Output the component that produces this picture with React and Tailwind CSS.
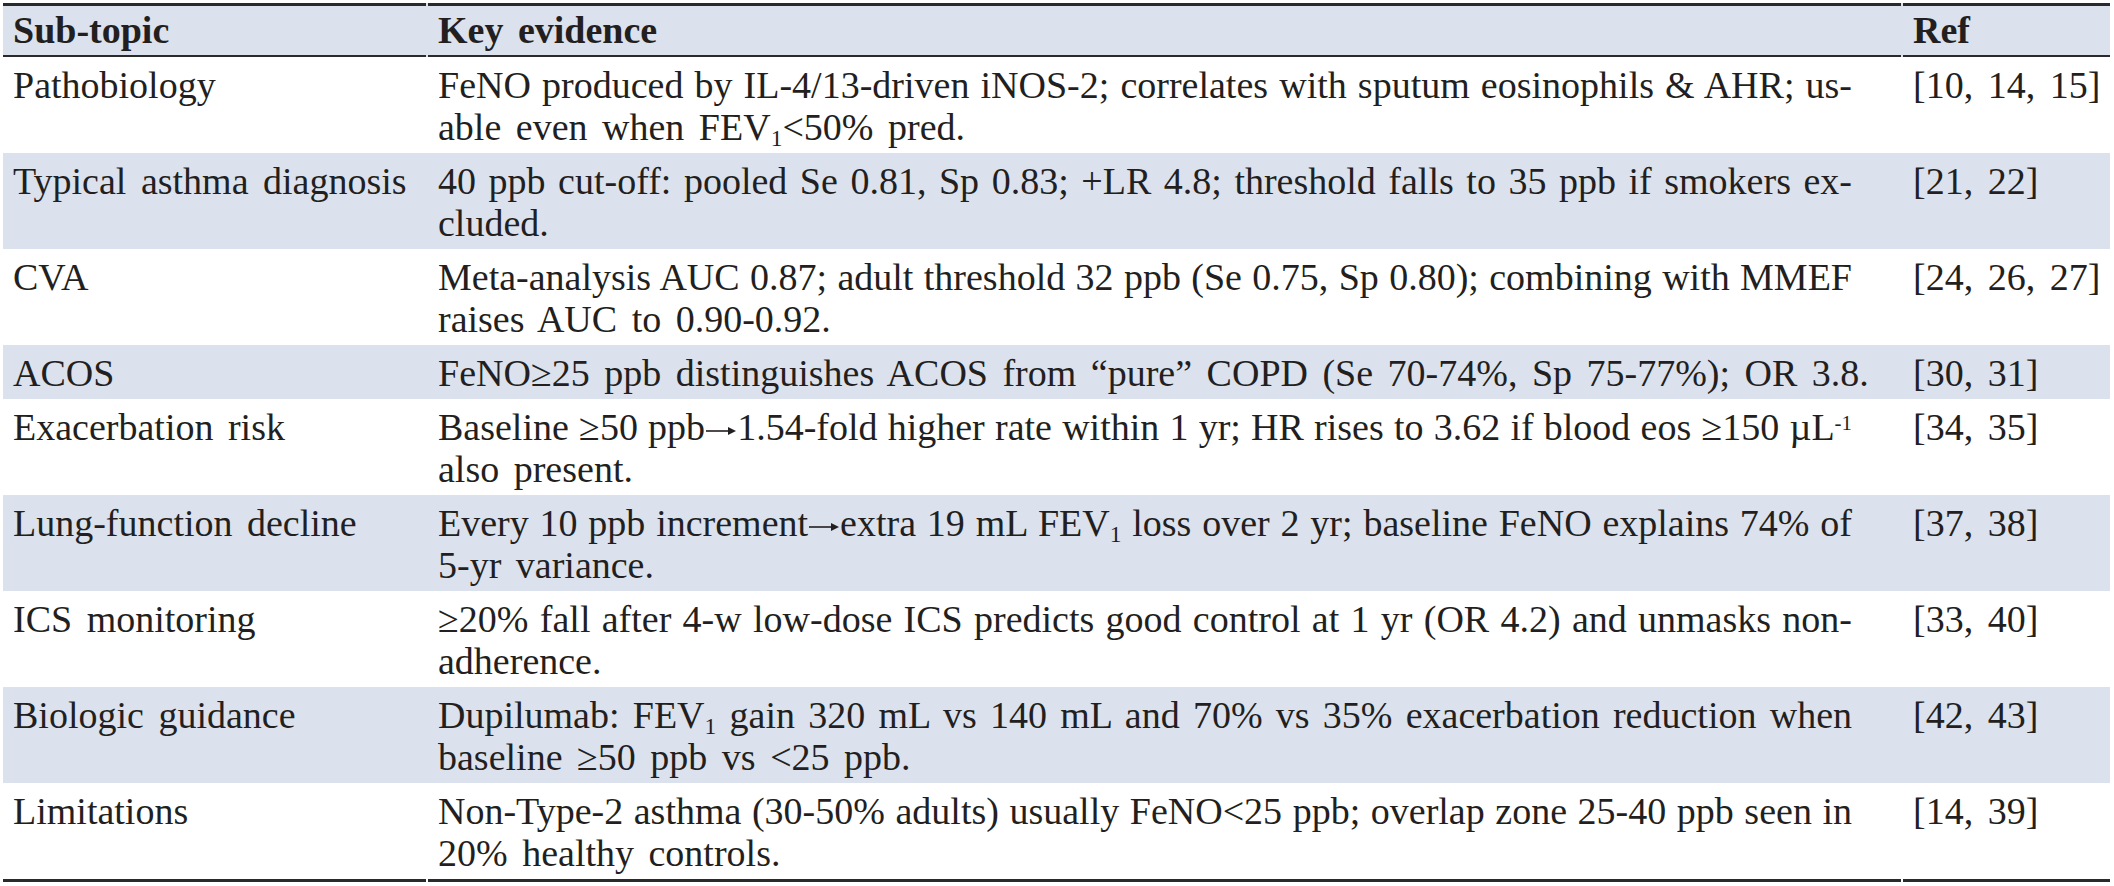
const Sub = ({ children }) => <sub className="text-[0.62em]">{children}</sub>;
const Sup = ({ children }) => <sup className="text-[0.55em]">{children}</sup>;
const FEV1 = () => <>FEV<Sub>1</Sub></>;

// long thin arrow like the Times glyph
const Arrow = () => (
  <svg viewBox="0 0 32 14" className="inline-block w-[32px] h-[14px] align-[2px]" aria-label="→">
    <line x1="1" y1="7" x2="29" y2="7" stroke="#231f20" strokeWidth="1.6" />
    <path d="M23 3 L31 7 L23 11 Z" fill="#231f20" />
  </svg>
);

const rows = [
  {
    topic: 'Pathobiology',
    lines: [
      'FeNO produced by IL-4/13-driven iNOS-2; correlates with sputum eosinophils & AHR; us-',
      <>able even when <FEV1 />&lt;50% pred.</>,
    ],
    ref: '[10, 14, 15]',
  },
  {
    topic: 'Typical asthma diagnosis',
    lines: [
      '40 ppb cut-off: pooled Se 0.81, Sp 0.83; +LR 4.8; threshold falls to 35 ppb if smokers ex-',
      'cluded.',
    ],
    ref: '[21, 22]',
  },
  {
    topic: 'CVA',
    lines: [
      'Meta-analysis AUC 0.87; adult threshold 32 ppb (Se 0.75, Sp 0.80); combining with MMEF',
      'raises AUC to 0.90-0.92.',
    ],
    ref: '[24, 26, 27]',
  },
  {
    topic: 'ACOS',
    lines: ['FeNO≥25 ppb distinguishes ACOS from “pure” COPD (Se 70-74%, Sp 75-77%); OR 3.8.'],
    ref: '[30, 31]',
  },
  {
    topic: 'Exacerbation risk',
    lines: [
      <>Baseline ≥50 ppb<Arrow />1.54-fold higher rate within 1 yr; HR rises to 3.62 if blood eos ≥150 µL<Sup>-1</Sup></>,
      'also present.',
    ],
    ref: '[34, 35]',
  },
  {
    topic: 'Lung-function decline',
    lines: [
      <>Every 10 ppb increment<Arrow />extra 19 mL <FEV1 /> loss over 2 yr; baseline FeNO explains 74% of</>,
      '5-yr variance.',
    ],
    ref: '[37, 38]',
  },
  {
    topic: 'ICS monitoring',
    lines: [
      '≥20% fall after 4-w low-dose ICS predicts good control at 1 yr (OR 4.2) and unmasks non-',
      'adherence.',
    ],
    ref: '[33, 40]',
  },
  {
    topic: 'Biologic guidance',
    lines: [
      <>Dupilumab: <FEV1 /> gain 320 mL vs 140 mL and 70% vs 35% exacerbation reduction when</>,
      'baseline ≥50 ppb vs <25 ppb.',
    ],
    ref: '[42, 43]',
  },
  {
    topic: 'Limitations',
    lines: [
      'Non-Type-2 asthma (30-50% adults) usually FeNO<25 ppb; overlap zone 25-40 ppb seen in',
      '20% healthy controls.',
    ],
    ref: '[14, 39]',
  },
];

export default function App() {
  return (
    <div className="min-h-screen bg-white pt-[3px] pl-[3px] font-['Liberation_Serif','Times_New_Roman',serif] text-[38px] leading-[42px] [word-spacing:5px] text-[#231f20]">
      <div className="w-[2107px]">
        {/* header */}
        <div className="flex gap-[2px] bg-[#dbe2ee] font-bold">
          <div className="w-[423px] border-t-[3px] border-b-2 border-[#2a2a2a] pl-[10px] pt-[3px] pb-[4px]">Sub-topic</div>
          <div className="w-[1473px] border-t-[3px] border-b-2 border-[#2a2a2a] pl-[10px] pt-[3px] pb-[4px]">Key evidence</div>
          <div className="flex-1 border-t-[3px] border-b-2 border-[#2a2a2a] pl-[10px] pt-[3px] pb-[4px]">Ref</div>
        </div>

        {rows.map((row, i) => {
          const last = i === rows.length - 1;
          const edge = last ? 'border-b-[3px] border-[#2a2a2a]' : '';
          return (
            <div key={row.topic} className={`flex gap-[2px] ${i % 2 === 1 ? 'bg-[#dbe2ee]' : 'bg-white'}`}>
              <div className={`w-[423px] pl-[10px] pt-[7px] pb-[5px] ${edge}`}>{row.topic}</div>
              <div className={`w-[1473px] pl-[10px] pr-[49px] pt-[7px] pb-[5px] ${edge}`}>
                {row.lines.map((line, j) => (
                  <div
                    key={j}
                    className={
                      j < row.lines.length - 1
                        ? 'whitespace-nowrap [word-spacing:0px] text-justify [text-align-last:justify]'
                        : 'whitespace-nowrap'
                    }
                  >
                    {line}
                  </div>
                ))}
              </div>
              <div className={`flex-1 pl-[10px] pt-[7px] pb-[5px] ${edge}`}>{row.ref}</div>
            </div>
          );
        })}
      </div>
    </div>
  );
}
